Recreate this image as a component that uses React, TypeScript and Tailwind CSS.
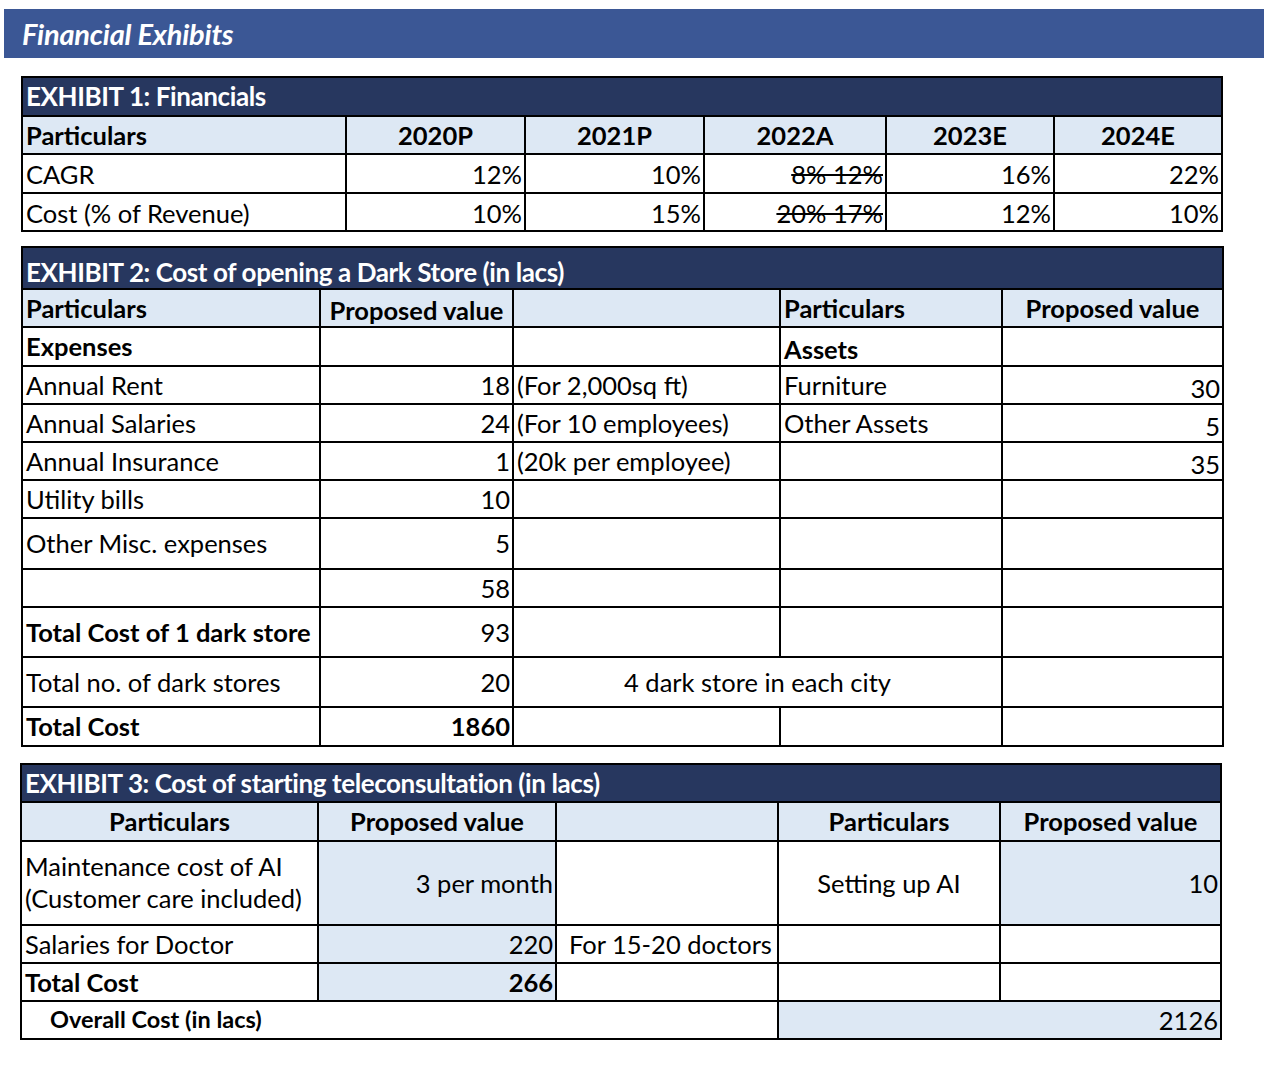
import React from "react";

const F = { fontFamily: "Lato, 'Open Sans', sans-serif" };

type CellProps = {
  children?: React.ReactNode;
  className?: string;
};

function C({ children, className = "" }: CellProps) {
  return (
    <div className={`border-r-2 border-b-2 border-black flex items-center overflow-hidden whitespace-nowrap ${className}`}>
      {children}
    </div>
  );
}

function Title({ children, span, h }: { children: React.ReactNode; span: string; h: string }) {
  return (
    <div className={`${span} ${h} bg-[#27375f] border-r-2 border-b-2 border-black flex items-center px-[3px] text-white font-bold text-[26px] tracking-[-0.4px]`}>
      {children}
    </div>
  );
}

export default function App() {
  return (
    <div className="w-[1264px] h-[1070px] bg-white text-black text-[25.5px] relative" style={F}>
      <div className="pt-[9px] pl-[4px]">
        <div className="h-[49px] bg-[#3b5795] flex items-center pl-[18px]">
          <span className="text-white font-bold italic text-[29px] tracking-[-0.2px]">Financial Exhibits</span>
        </div>
      </div>

      {/* Exhibit 1 */}
      <div className="ml-[21px] mt-[18px] w-[1202px] grid grid-cols-[324px_179px_179px_182px_168px_168px] border-l-2 border-t-2 border-black">
        <Title span="col-span-6" h="h-[39px]">EXHIBIT 1: Financials</Title>
        <C className="h-[38px] bg-[#dde8f4] font-bold px-[3px]">Particulars</C>
        <C className="h-[38px] bg-[#dde8f4] font-bold justify-center">2020P</C>
        <C className="h-[38px] bg-[#dde8f4] font-bold justify-center">2021P</C>
        <C className="h-[38px] bg-[#dde8f4] font-bold justify-center">2022A</C>
        <C className="h-[38px] bg-[#dde8f4] font-bold justify-center">2023E</C>
        <C className="h-[38px] bg-[#dde8f4] font-bold justify-center">2024E</C>

        <C className="h-[39px] px-[3px] pt-[2px]">CAGR</C>
        <C className="h-[39px] justify-end pr-[2px] pt-[2px]">12%</C>
        <C className="h-[39px] justify-end pr-[2px] pt-[2px]">10%</C>
        <C className="h-[39px] justify-end pr-[2px] pt-[2px]"><span className="line-through">8% 12%</span></C>
        <C className="h-[39px] justify-end pr-[2px] pt-[2px]">16%</C>
        <C className="h-[39px] justify-end pr-[2px] pt-[2px]">22%</C>

        <C className="h-[38px] px-[3px] pt-[2px]">Cost (% of Revenue)</C>
        <C className="h-[38px] justify-end pr-[2px] pt-[2px]">10%</C>
        <C className="h-[38px] justify-end pr-[2px] pt-[2px]">15%</C>
        <C className="h-[38px] justify-end pr-[2px] pt-[2px]"><span className="line-through">20% 17%</span></C>
        <C className="h-[38px] justify-end pr-[2px] pt-[2px]">12%</C>
        <C className="h-[38px] justify-end pr-[2px] pt-[2px]">10%</C>
      </div>

      {/* Exhibit 2 */}
      <div className="ml-[21px] mt-[14px] w-[1203px] grid grid-cols-[298px_193px_267px_222px_221px] border-l-2 border-t-2 border-black">
        <Title span="col-span-5" h="h-[42px] pt-[8px]">EXHIBIT 2: Cost of opening a Dark Store (in lacs)</Title>
        <C className="h-[38px] bg-[#dde8f4] font-bold px-[3px]">Particulars</C>
        <C className="h-[38px] bg-[#dde8f4] font-bold justify-center pt-[4px]">Proposed value</C>
        <C className="h-[38px] bg-[#dde8f4]"></C>
        <C className="h-[38px] bg-[#dde8f4] font-bold px-[3px]">Particulars</C>
        <C className="h-[38px] bg-[#dde8f4] font-bold justify-center">Proposed value</C>

        <C className="h-[39px] font-bold px-[3px]">Expenses</C>
        <C className="h-[39px]"></C>
        <C className="h-[39px]"></C>
        <C className="h-[39px] font-bold px-[3px] pt-[6px]">Assets</C>
        <C className="h-[39px]"></C>

        <C className="h-[38px] px-[3px]">Annual Rent</C>
        <C className="h-[38px] justify-end pr-[2px]">18</C>
        <C className="h-[38px] px-[3px]">(For 2,000sq ft)</C>
        <C className="h-[38px] px-[3px]">Furniture</C>
        <C className="h-[38px] justify-end pr-[2px] pt-[6px]">30</C>

        <C className="h-[38px] px-[3px]">Annual Salaries</C>
        <C className="h-[38px] justify-end pr-[2px]">24</C>
        <C className="h-[38px] px-[3px]">(For 10 employees)</C>
        <C className="h-[38px] px-[3px]">Other Assets</C>
        <C className="h-[38px] justify-end pr-[2px] pt-[6px]">5</C>

        <C className="h-[38px] px-[3px]">Annual Insurance</C>
        <C className="h-[38px] justify-end pr-[2px]">1</C>
        <C className="h-[38px] px-[3px]">(20k per employee)</C>
        <C className="h-[38px]"></C>
        <C className="h-[38px] justify-end pr-[2px] pt-[6px]">35</C>

        <C className="h-[38px] px-[3px]">Utility bills</C>
        <C className="h-[38px] justify-end pr-[2px]">10</C>
        <C className="h-[38px]"></C>
        <C className="h-[38px]"></C>
        <C className="h-[38px]"></C>

        <C className="h-[51px] px-[3px]">Other Misc. expenses</C>
        <C className="h-[51px] justify-end pr-[2px]">5</C>
        <C className="h-[51px]"></C>
        <C className="h-[51px]"></C>
        <C className="h-[51px]"></C>

        <C className="h-[38px] px-[3px]"></C>
        <C className="h-[38px] justify-end pr-[2px]">58</C>
        <C className="h-[38px]"></C>
        <C className="h-[38px]"></C>
        <C className="h-[38px]"></C>

        <C className="h-[50px] px-[3px] font-bold">Total Cost of 1 dark store</C>
        <C className="h-[50px] justify-end pr-[2px]">93</C>
        <C className="h-[50px]"></C>
        <C className="h-[50px]"></C>
        <C className="h-[50px]"></C>

        <C className="h-[50px] px-[3px]">Total no. of dark stores</C>
        <C className="h-[50px] justify-end pr-[2px]">20</C>
        <C className="h-[50px] col-span-2 justify-center">4 dark store in each city</C>
        <C className="h-[50px]"></C>

        <C className="h-[39px] px-[3px] font-bold">Total Cost</C>
        <C className="h-[39px] justify-end pr-[2px] font-bold">1860</C>
        <C className="h-[39px]"></C>
        <C className="h-[39px]"></C>
        <C className="h-[39px]"></C>
      </div>

      {/* Exhibit 3 */}
      <div className="ml-[20px] mt-[16px] w-[1202px] grid grid-cols-[297px_238px_222px_222px_221px] border-l-2 border-t-2 border-black">
        <Title span="col-span-5" h="h-[38px]">EXHIBIT 3: Cost of starting teleconsultation (in lacs)</Title>
        <C className="h-[39px] bg-[#dde8f4] font-bold justify-center">Particulars</C>
        <C className="h-[39px] bg-[#dde8f4] font-bold justify-center">Proposed value</C>
        <C className="h-[39px] bg-[#dde8f4]"></C>
        <C className="h-[39px] bg-[#dde8f4] font-bold justify-center">Particulars</C>
        <C className="h-[39px] bg-[#dde8f4] font-bold justify-center">Proposed value</C>

        <C className="h-[84px] px-[3px] leading-[32px]">
          <div className="-mt-[2px]">
            <div>Maintenance cost of AI</div>
            <div>(Customer care included)</div>
          </div>
        </C>
        <C className="h-[84px] bg-[#dde8f4] justify-end pr-[2px]">3 per month</C>
        <C className="h-[84px]"></C>
        <C className="h-[84px] justify-center">Setting up AI</C>
        <C className="h-[84px] bg-[#dde8f4] justify-end pr-[2px]">10</C>

        <C className="h-[38px] px-[3px]">Salaries for Doctor</C>
        <C className="h-[38px] bg-[#dde8f4] justify-end pr-[2px]">220</C>
        <C className="h-[38px] pl-[12px]">For 15-20 doctors</C>
        <C className="h-[38px]"></C>
        <C className="h-[38px]"></C>

        <C className="h-[38px] px-[3px] font-bold">Total Cost</C>
        <C className="h-[38px] bg-[#dde8f4] justify-end pr-[2px] font-bold">266</C>
        <C className="h-[38px]"></C>
        <C className="h-[38px]"></C>
        <C className="h-[38px]"></C>

        <C className="h-[38px] col-span-3 pl-[28px] font-bold text-[23.5px]">Overall Cost (in lacs)</C>
        <C className="h-[38px] col-span-2 bg-[#dde8f4] justify-end pr-[2px]">2126</C>
      </div>
    </div>
  );
}
